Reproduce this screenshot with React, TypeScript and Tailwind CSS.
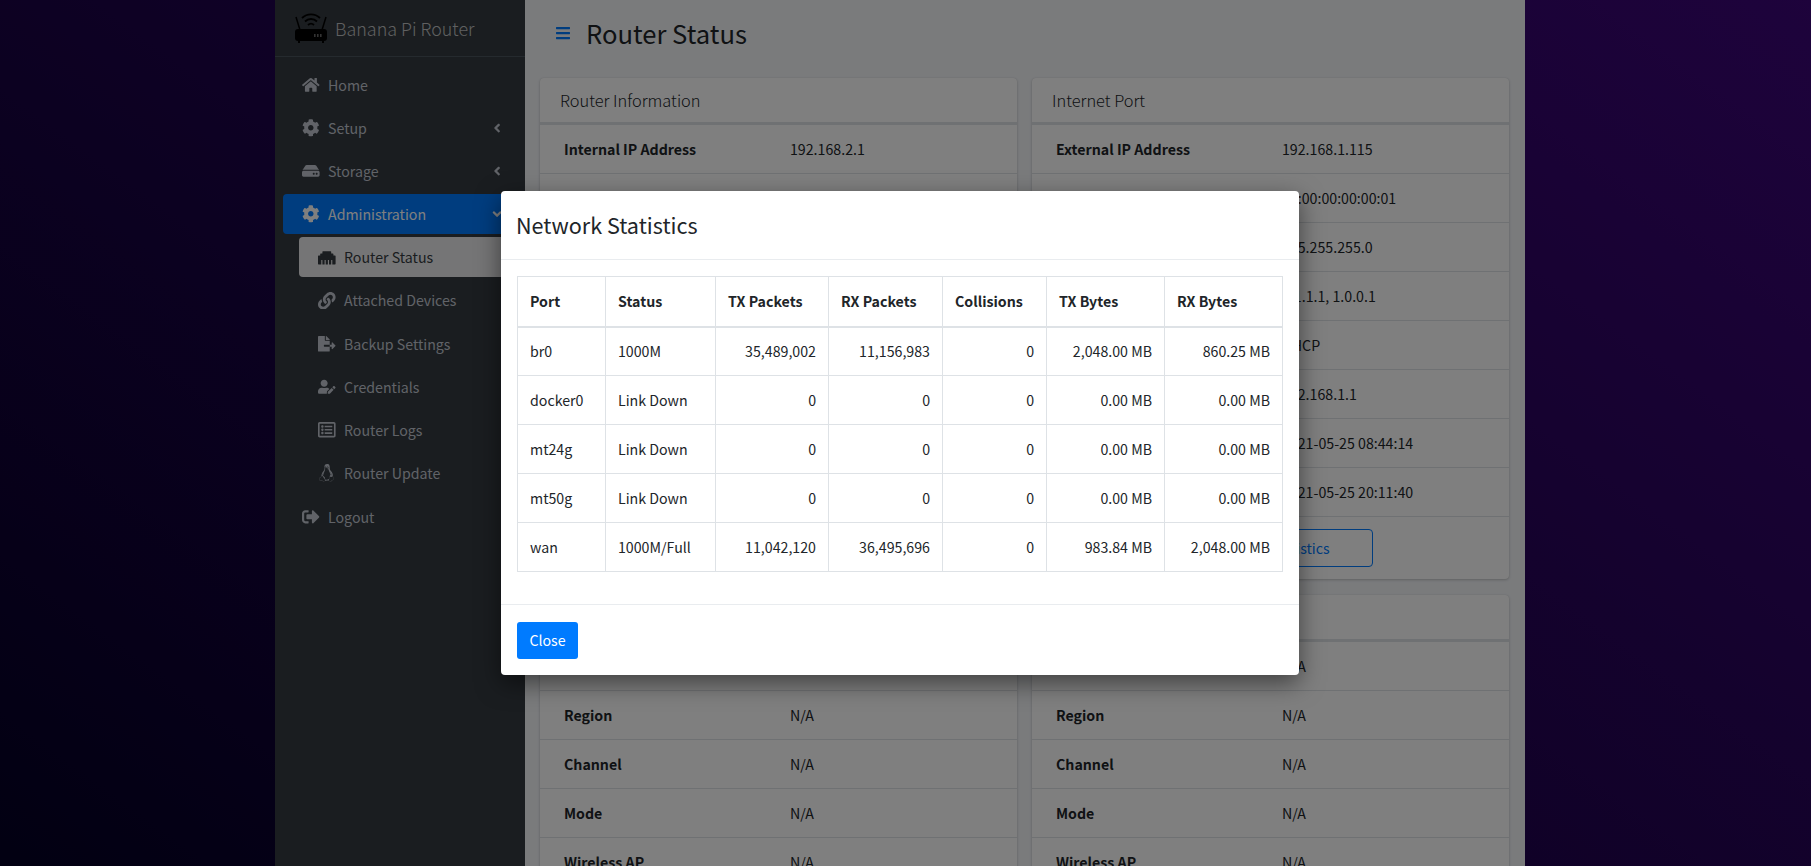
import { FaAngleDown, FaAngleLeft, FaBars, FaCog, FaEthernet, FaFileExport, FaHdd, FaHome, FaLink, FaLinux, FaRegListAlt, FaSignOutAlt, FaUserEdit } from 'react-icons/fa';
import type { ReactNode } from 'react';

const font = '[font-family:"Noto_Sans_CJK_JP","Liberation_Sans",sans-serif]';

const RouterLogo = () => (
  <svg width="32" height="30" viewBox="0 0 32 30" fill="none">
    <rect x="0" y="16" width="32" height="12" rx="3" fill="#000" />
    <rect x="3" y="27" width="2" height="3" fill="#000" />
    <rect x="27" y="27" width="2" height="3" fill="#000" />
    <path d="M1 4 L5 17 M31 4 L27 17" stroke="#000" strokeWidth="1.5" />
    <path d="M7 5 A13 13 0 0 1 25 5" stroke="#000" strokeWidth="1.8" />
    <path d="M10 8.5 A8.5 8.5 0 0 1 22 8.5" stroke="#000" strokeWidth="1.8" />
    <path d="M13 12 A4.5 4.5 0 0 1 19 12" stroke="#000" strokeWidth="1.8" />
    <rect x="19" y="21" width="1.6" height="3" fill="#666" />
    <rect x="22" y="21" width="1.6" height="3" fill="#666" />
    <rect x="25" y="21" width="1.6" height="3" fill="#666" />
  </svg>
);

const NavItem = ({ icon, label, arrow, active }: { icon: ReactNode; label: string; arrow?: ReactNode; active?: boolean }) => (
  <div className={`flex h-10 items-center rounded pl-[18px] pr-[13px] ${active ? 'bg-[#007bff] text-white' : 'text-[#c2c7d0]'}`}>
    <span className="flex w-5 justify-center [&>svg]:h-[17.6px] [&>svg]:w-auto [&>svg]:shrink-0">{icon}</span>
    <span className="ml-[7px] flex-1 leading-6">{label}</span>
    {arrow}
  </div>
);

const SubItem = ({ icon, label, active }: { icon: ReactNode; label: string; active?: boolean }) => (
  <div className={`flex h-10 items-center rounded pl-[18px] ${active ? 'bg-white/90 text-[#343a40]' : 'text-[#c2c7d0]'}`}>
    <span className="flex w-5 justify-center [&>svg]:h-[17.6px] [&>svg]:w-auto [&>svg]:shrink-0">{icon}</span>
    <span className="ml-[7px] leading-6">{label}</span>
  </div>
);

const Sidebar = () => (
  <aside className="w-[250px] shrink-0 bg-[#343a40]">
    <div className="flex h-[57px] items-center border-b border-[#4b545c] pl-5">
      <RouterLogo />
      <span className="ml-2 text-[17.9px] font-light leading-6 text-white/70">Banana Pi Router</span>
    </div>
    <nav className="mt-2 flex flex-col gap-[3.1px] px-2">
      <NavItem icon={<FaHome />} label="Home" />
      <NavItem icon={<FaCog />} label="Setup" arrow={<FaAngleLeft />} />
      <NavItem icon={<FaHdd />} label="Storage" arrow={<FaAngleLeft />} />
      <NavItem icon={<FaCog />} label="Administration" arrow={<FaAngleDown />} active />
      <div className="flex flex-col gap-[3.1px] pl-[16px]">
        <SubItem icon={<FaEthernet />} label="Router Status" active />
        <SubItem icon={<FaLink />} label="Attached Devices" />
        <SubItem icon={<FaFileExport />} label="Backup Settings" />
        <SubItem icon={<FaUserEdit />} label="Credentials" />
        <SubItem icon={<FaRegListAlt />} label="Router Logs" />
        <SubItem icon={<FaLinux />} label="Router Update" />
      </div>
      <div className="mt-px">
        <NavItem icon={<FaSignOutAlt />} label="Logout" />
      </div>
    </nav>
  </aside>
);

const Row = ({ label, value }: { label: string; value: string }) => (
  <div className="flex h-[49px] items-center border-t border-[#dee2e6] px-6 pt-px first:border-t-0">
    <span className="w-[226px] font-bold">{label}</span>
    <span>{value}</span>
  </div>
);

const Card = ({ title, rows, footer }: { title: string; rows: string[][]; footer?: ReactNode }) => (
  <div className="rounded bg-white shadow-[0_0_1px_rgba(0,0,0,0.13),0_1px_3px_rgba(0,0,0,0.2)]">
    <div className="flex h-[46px] items-center border-b-2 border-[#dee2e6] px-5 text-[16.4px] font-light">{title}</div>
    {rows.map(([label, value]) => (
      <Row key={label} label={label} value={value} />
    ))}
    {footer}
  </div>
);

const wireless = [
  ['SSID', 'N/A'],
  ['Region', 'N/A'],
  ['Channel', 'N/A'],
  ['Mode', 'N/A'],
  ['Wireless AP', 'N/A'],
];

const Content = () => (
  <main className="flex-1 bg-[#f4f6f9]">
    <div className="flex h-[66px] items-center pl-[30px]">
      <FaBars className="text-[16px] text-[#007bff]" />
      <h1 className="ml-[15px] text-[25.6px] font-normal leading-8 text-[#212529]">Router Status</h1>
    </div>
    <div className="mt-3 grid grid-cols-[477px_477px] gap-x-[15px] gap-y-4 px-[15px]">
      <Card
        title="Router Information"
        rows={[
          ['Internal IP Address', '192.168.2.1'],
          ['IP Subnet Mask', '255.255.255.0'],
          ['DHCP Server', 'Enabled'],
          ['Firmware Version', '1.0.0'],
          ['Kernel Version', '4.19.0'],
          ['Model', 'Banana Pi R2'],
          ['CPU Usage', '2%'],
          ['Memory Usage', '20%'],
        ]}
      />
      <Card
        title="Internet Port"
        rows={[
          ['External IP Address', '192.168.1.115'],
          ['MAC Address', '00:00:00:00:00:01'],
          ['IP Subnet Mask', '255.255.255.0'],
          ['Domain Name Server', '1.1.1.1, 1.0.0.1'],
          ['Connection Type', 'DHCP'],
          ['Default Gateway', '192.168.1.1'],
          ['Lease Obtained', '2021-05-25 08:44:14'],
          ['Lease Expires', '2021-05-25 20:11:40'],
        ]}
        footer={
          <div className="flex h-[63px] items-center justify-end border-t border-[#dee2e6] pr-[136px]">
            <button className="h-[38px] w-[206px] rounded border border-[#007bff] pt-px text-[#007bff]">Network Statistics</button>
          </div>
        }
      />
      <Card title="Wireless 2.4 GHz" rows={wireless} />
      <Card title="Wireless 5 GHz" rows={wireless} />
    </div>
  </main>
);

const ports = [
  ['br0', '1000M', '35,489,002', '11,156,983', '0', '2,048.00 MB', '860.25 MB'],
  ['docker0', 'Link Down', '0', '0', '0', '0.00 MB', '0.00 MB'],
  ['mt24g', 'Link Down', '0', '0', '0', '0.00 MB', '0.00 MB'],
  ['mt50g', 'Link Down', '0', '0', '0', '0.00 MB', '0.00 MB'],
  ['wan', '1000M/Full', '11,042,120', '36,495,696', '0', '983.84 MB', '2,048.00 MB'],
];

const headers = ['Port', 'Status', 'TX Packets', 'RX Packets', 'Collisions', 'TX Bytes', 'RX Bytes'];
const colWidths = ['w-[88px]', 'w-[110px]', 'w-[113px]', 'w-[114px]', 'w-[104px]', 'w-[118px]', 'w-[118px]'];

const StatsModal = () => (
  <div className="absolute inset-0 bg-black/50">
    <div className="absolute left-[501px] top-[191px] w-[798px] rounded bg-white text-[#212529] shadow-[0_8px_24px_rgba(0,0,0,0.5)]">
      <div className="flex h-[69px] items-center border-b border-[#e9ecef] pl-[15px] text-[21.6px] leading-8">Network Statistics</div>
      <div className="px-4 pb-[32px] pt-4">
        <table className="w-[765px] table-fixed border-collapse">
          <colgroup>
            {colWidths.map((w, i) => (
              <col key={i} className={w} />
            ))}
          </colgroup>
          <thead>
            <tr className="h-[50px] border-b-2 border-[#dee2e6]">
              {headers.map((h) => (
                <th key={h} className="border border-b-2 border-[#dee2e6] px-3 text-left font-bold">{h}</th>
              ))}
            </tr>
          </thead>
          <tbody>
            {ports.map((row) => (
              <tr key={row[0]} className="h-[49px]">
                {row.map((cell, i) => (
                  <td key={i} className={`border border-[#dee2e6] px-3 pt-px ${i > 1 ? 'text-right' : 'text-left'}`}>{cell}</td>
                ))}
              </tr>
            ))}
          </tbody>
        </table>
      </div>
      <div className="flex h-[71px] items-center border-t border-[#e9ecef] px-4">
        <button className="h-[37px] w-[61px] rounded-[3px] bg-[#007bff] pt-px text-white">Close</button>
      </div>
    </div>
  </div>
);

export default function App() {
  return (
    <div className={`relative h-screen overflow-hidden bg-[linear-gradient(36deg,#040024_0%,#3c0678_100%)] text-[14.2px] text-[#212529] ${font}`}>
      <div className="ml-[275px] flex h-full w-[1250px]">
        <Sidebar />
        <Content />
      </div>
      <StatsModal />
    </div>
  );
}
